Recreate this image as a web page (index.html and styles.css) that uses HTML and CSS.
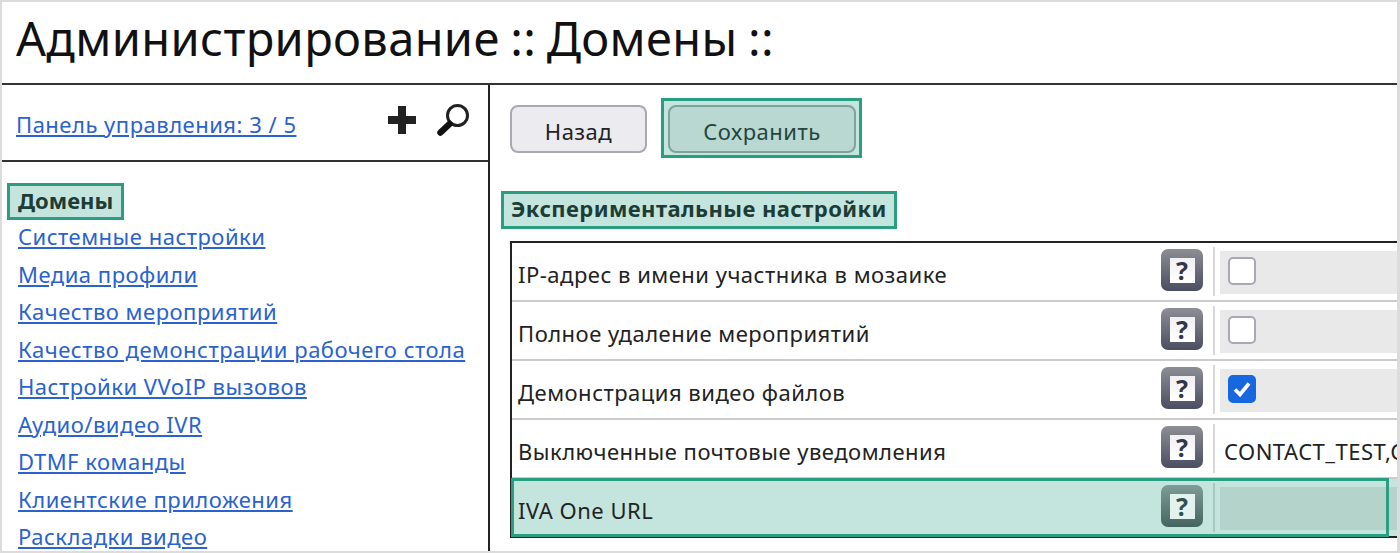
FILE: index.html
```html
<!DOCTYPE html>
<html lang="en">
<head>
    <meta charset="UTF-8">
    <title>Администрирование :: Домены ::</title>
    <link rel="stylesheet" href="styles.css">
</head>
<body>
    <div class="frame">
        <h1 class="title">Администрирование :: Домены ::</h1>
        <div class="columns">
            <aside class="sidebar">
                <div class="side-head">
                    <a href="#" class="panel-link">Панель управления: 3 / 5</a>
                    <div class="side-icons">
                        <svg width="28" height="28" viewBox="0 0 28 28"><path d="M10 0h8v10h10v8H18v10h-8V18H0v-8h10z" fill="#222"/></svg>
                        <svg width="34" height="34" viewBox="0 0 34 34"><circle cx="21.5" cy="12.5" r="10" fill="none" stroke="#222" stroke-width="3"/><path d="M13.5 21 4.5 29.5" stroke="#111" stroke-width="6.5" stroke-linecap="round"/></svg>
                    </div>
                </div>
                <nav class="side-nav">
                    <span class="nav-current">Домены</span>
                    <a href="#">Системные настройки</a>
                    <a href="#">Медиа профили</a>
                    <a href="#">Качество мероприятий</a>
                    <a href="#">Качество демонстрации рабочего стола</a>
                    <a href="#">Настройки VVoIP вызовов</a>
                    <a href="#">Аудио/видео IVR</a>
                    <a href="#">DTMF команды</a>
                    <a href="#">Клиентские приложения</a>
                    <a href="#">Раскладки видео</a>
                </nav>
            </aside>
            <main class="content">
                <div class="actions">
                    <button type="button" class="btn btn-back">Назад</button>
                    <div class="save-mark"><button type="button" class="btn btn-save">Сохранить</button></div>
                </div>
                <h2 class="section-title">Экспериментальные настройки</h2>
                <div class="settings">
                    <div class="row">
                        <div class="row-label">IP-адрес в имени участника в мозаике</div>
                        <div class="help"><span>?</span></div>
                        <div class="row-value filled"><span class="check"></span></div>
                    </div>
                    <div class="row">
                        <div class="row-label">Полное удаление мероприятий</div>
                        <div class="help"><span>?</span></div>
                        <div class="row-value filled"><span class="check"></span></div>
                    </div>
                    <div class="row">
                        <div class="row-label">Демонстрация видео файлов</div>
                        <div class="help"><span>?</span></div>
                        <div class="row-value filled">
                            <span class="check checked"><svg width="20" height="20" viewBox="0 0 20 20"><path d="M3 10.5 8 15.5 17 4.5" fill="none" stroke="#fff" stroke-width="3.6"/></svg></span>
                        </div>
                    </div>
                    <div class="row">
                        <div class="row-label">Выключенные почтовые уведомления</div>
                        <div class="help"><span>?</span></div>
                        <div class="row-value text-value">CONTACT_TEST,CONTACT_REMOVED</div>
                    </div>
                    <div class="row row-last">
                        <div class="row-label">IVA One URL</div>
                        <div class="help"><span>?</span></div>
                        <div class="row-value filled"></div>
                        <div class="row-mark"></div>
                    </div>
                </div>
            </main>
        </div>
    </div>
</body>
</html>
```

FILE: styles.css
```css
/* General */
* {
    box-sizing: border-box;
    margin: 0;
    padding: 0;
    font-family: 'Noto Sans', sans-serif;
    letter-spacing: 0.5px;
}

html, body {
    height: 553px;
    overflow: hidden;
    background: white;
}

.frame {
    height: 553px;
    border: solid #dcdcdc;
    border-width: 2px 3px 2px 2px;
    display: flex;
    flex-direction: column;
    overflow: hidden;
}

.title {
    height: 83px;
    flex: none;
    padding: 5px 0 0 14px;
    font-size: 47px;
    line-height: 62px;
    font-weight: 400;
    letter-spacing: 0.35px;
    word-spacing: -2px;
    color: #111;
    border-bottom: 2px solid #333;
}

.columns {
    flex: 1;
    display: flex;
    min-height: 0;
}

/* Sidebar */
.sidebar {
    width: 488px;
    flex: none;
    border-right: 2px solid #222;
    overflow: hidden;
}

.side-head {
    height: 77px;
    display: flex;
    align-items: center;
    justify-content: space-between;
    padding: 2px 18px 0 14px;
    border-bottom: 2px solid #333;
}

.side-head a,
.side-nav a {
    color: #2a62cf;
    font-size: 22px;
}

.side-icons {
    display: flex;
    align-items: center;
    gap: 20px;
    margin-top: -8px;
}

.side-nav {
    padding: 21px 0 0 5px;
    display: flex;
    flex-direction: column;
    align-items: flex-start;
}

.side-nav a {
    margin-left: 11px;
    height: 37.5px;
    line-height: 37px;
    white-space: nowrap;
}

.nav-current {
    height: 37px;
    margin-bottom: -2px;
    padding: 0 8px;
    line-height: 28px;
    font-size: 22px;
    font-weight: 700;
    letter-spacing: 0;
    color: #1c3c35;
    background: #c4e5dd;
    border: 3px solid #2a9d82;
}

/* Main area */
.content {
    flex: 1;
    min-width: 0;
    padding: 13px 0 0 11px;
    overflow: hidden;
}

.actions {
    display: flex;
    align-items: flex-start;
    gap: 14px;
    padding-left: 9px;
    height: 59px;
}

.btn {
    width: 137px;
    height: 48px;
    padding-top: 3px;
    font-size: 22px;
    color: #222;
    background: #ebebf0;
    border: 2px solid #a9a9b6;
    border-radius: 8px;
}

.btn-back {
    margin-top: 7px;
}

.save-mark {
    padding: 4px 3px 2px 4px;
    background: #c4e5dd;
    border: 3px solid #2a9d82;
}

.btn-save {
    display: block;
    width: 188px;
    color: #24453e;
    background: #b9d8d1;
    border-color: #7fa39b;
}

.section-title {
    display: inline-block;
    height: 38px;
    margin-top: 34px;
    padding: 0 7px;
    line-height: 28px;
    font-size: 22px;
    font-weight: 700;
    letter-spacing: 0.42px;
    color: #1c3c35;
    background: #c4e5dd;
    border: 3px solid #2a9d82;
    white-space: nowrap;
}

/* Settings table */
.settings {
    width: 1000px;
    margin: 12px 0 0 9px;
    border: 2px solid #222;
}

.row {
    position: relative;
    height: 59px;
    display: flex;
    align-items: center;
    border-bottom: 2px solid #ccc;
}

.row-last {
    height: 57px;
    border-bottom: none;
    background: #c4e5dd;
}

.row-label {
    width: 649px;
    flex: none;
    padding: 5px 0 0 6px;
    font-size: 22px;
    color: #222;
    white-space: nowrap;
}

.help {
    width: 42px;
    height: 42px;
    flex: none;
    margin-top: -3px;
    display: flex;
    align-items: center;
    justify-content: center;
    border-radius: 7px;
    background: linear-gradient(#8d8d94, #4b4e62);
}

.help span {
    width: 25px;
    height: 25px;
    background: linear-gradient(#f0f0f3, #fff);
    color: #33354a;
    font-size: 25px;
    font-weight: 700;
    line-height: 25px;
    letter-spacing: 0;
    text-align: center;
}

.row-value {
    flex: 1;
    height: 49px;
    margin-left: 10px;
    padding-left: 9px;
    border-left: 2px solid #d8d8d8;
    display: flex;
    align-items: center;
    font-size: 22px;
    color: #222;
    white-space: nowrap;
}

.text-value {
    padding-top: 5px;
}

.filled {
    padding-left: 13px;
    background: linear-gradient(to right, white 5px, #e9e9e9 5px) 0 4px / 100% 43px no-repeat;
}

.row-last .help {
    background: linear-gradient(#7f9c98, #44655f);
}

.row-last .help span {
    background: #e2f2ee;
    color: #2f524c;
}

.row-last .filled {
    border-left-color: #a8c9c1;
    background: linear-gradient(to right, #c4e5dd 5px, #b4d3cb 5px) 0 4px / 100% 43px no-repeat;
}

.check {
    width: 28px;
    height: 28px;
    margin-top: -2px;
    display: flex;
    align-items: center;
    justify-content: center;
    background: white;
    border: 2px solid #a9a9b6;
    border-radius: 5px;
}

.checked {
    background: #1667e0;
    border-color: #1667e0;
}

/* Highlight over the last row */
.row-mark {
    position: absolute;
    left: -1px;
    top: -1px;
    width: 878px;
    height: 59px;
    border: 3px solid #2a9d82;
}
```
